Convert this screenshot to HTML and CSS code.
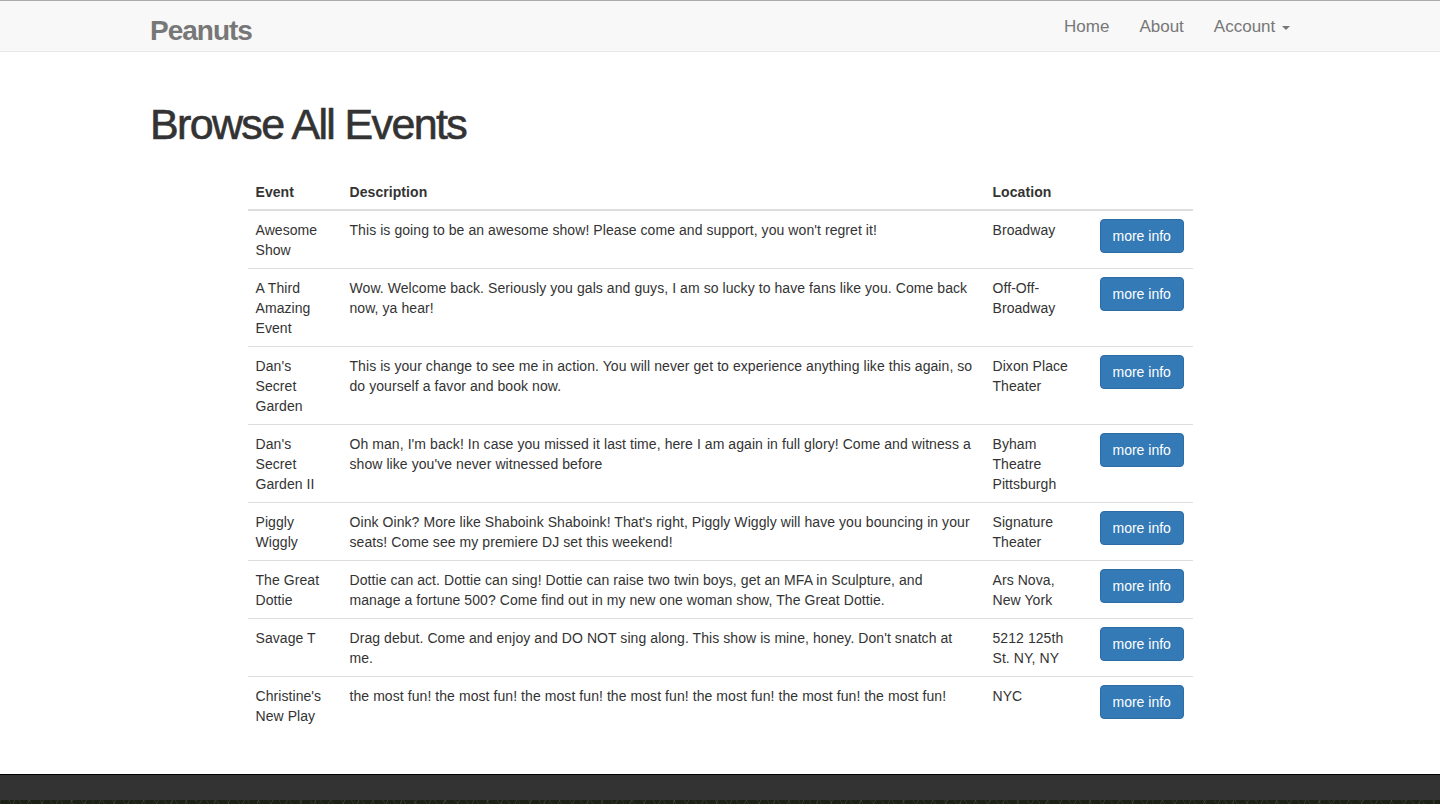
FILE: index.html
```html
<!DOCTYPE html>
<html lang="en">
<head>
<meta charset="utf-8">
<title>Peanuts - Browse All Events</title>
<link rel="stylesheet" href="styles.css">
</head>
<body>
<nav class="navbar">
  <div class="container navbar-inner">
    <a class="brand" href="#">Peanuts</a>
    <ul class="nav">
      <li><a href="#">Home</a></li>
      <li><a href="#">About</a></li>
      <li><a href="#">Account <span class="caret"></span></a></li>
    </ul>
  </div>
</nav>

<main class="container page">
  <h1 class="page-title">Browse All Events</h1>
  <div class="events-wrap">
    <table class="events">
      <thead>
        <tr>
          <th class="c-event">Event</th>
          <th class="c-desc">Description</th>
          <th class="c-loc">Location</th>
          <th class="c-btn"></th>
        </tr>
      </thead>
      <tbody>
        <tr>
          <td>Awesome Show</td>
          <td>This is going to be an awesome show! Please come and support, you won't regret it!</td>
          <td>Broadway</td>
          <td><a class="btn" href="#">more info</a></td>
        </tr>
        <tr>
          <td>A Third Amazing Event</td>
          <td>Wow. Welcome back. Seriously you gals and guys, I am so lucky to have fans like you. Come back now, ya hear!</td>
          <td>Off-Off-Broadway</td>
          <td><a class="btn" href="#">more info</a></td>
        </tr>
        <tr>
          <td>Dan's Secret Garden</td>
          <td>This is your change to see me in action. You will never get to experience anything like this again, so do yourself a favor and book now.</td>
          <td>Dixon Place Theater</td>
          <td><a class="btn" href="#">more info</a></td>
        </tr>
        <tr>
          <td>Dan's Secret Garden II</td>
          <td>Oh man, I'm back! In case you missed it last time, here I am again in full glory! Come and witness a show like you've never witnessed before</td>
          <td>Byham Theatre Pittsburgh</td>
          <td><a class="btn" href="#">more info</a></td>
        </tr>
        <tr>
          <td>Piggly Wiggly</td>
          <td>Oink Oink? More like Shaboink Shaboink! That's right, Piggly Wiggly will have you bouncing in your seats! Come see my premiere DJ set this weekend!</td>
          <td>Signature Theater</td>
          <td><a class="btn" href="#">more info</a></td>
        </tr>
        <tr>
          <td>The Great Dottie</td>
          <td>Dottie can act. Dottie can sing! Dottie can raise two twin boys, get an MFA in Sculpture, and manage a fortune 500? Come find out in my new one woman show, The Great Dottie.</td>
          <td>Ars Nova, New York</td>
          <td><a class="btn" href="#">more info</a></td>
        </tr>
        <tr>
          <td>Savage T</td>
          <td>Drag debut. Come and enjoy and DO NOT sing along. This show is mine, honey. Don't snatch at me.</td>
          <td>5212 125th St. NY, NY</td>
          <td><a class="btn" href="#">more info</a></td>
        </tr>
        <tr>
          <td>Christine's New Play</td>
          <td>the most fun! the most fun! the most fun! the most fun! the most fun! the most fun! the most fun!</td>
          <td>NYC</td>
          <td><a class="btn" href="#">more info</a></td>
        </tr>
      </tbody>
    </table>
  </div>
</main>

<footer class="footer">
  <div class="footer-bar"></div>
  <div class="footer-texture"></div>
</footer>
</body>
</html>
```

FILE: styles.css
```css
* {
  box-sizing: border-box;
}

html, body {
  margin: 0;
  padding: 0;
}

body {
  font-family: "Liberation Sans", Arial, Helvetica, sans-serif;
  font-size: 14px;
  line-height: 20px;
  color: #333;
  background: #fff;
}

a {
  text-decoration: none;
}

.container {
  width: 1170px;
  margin: 0 auto;
  padding: 0 15px;
}

/* Navbar */
.navbar {
  background: #f8f8f8;
  border-top: 1px solid #aaa;
  border-bottom: 1px solid #e7e7e7;
}

.navbar-inner {
  display: flex;
  justify-content: space-between;
  align-items: flex-start;
  height: 50px;
}

.brand {
  display: block;
  margin-left: -15px;
  padding: 20px 15px 10px;
  font-size: 28px;
  font-weight: bold;
  letter-spacing: -1px;
  line-height: 20px;
  color: #777;
}

.nav {
  display: flex;
  list-style: none;
  margin: 0 -15px 0 0;
  padding: 0;
}

.nav a {
  display: block;
  padding: 16px 15px 14px;
  font-size: 17px;
  line-height: 20px;
  color: #777;
}

.caret {
  display: inline-block;
  width: 0;
  height: 0;
  margin-left: 2px;
  vertical-align: middle;
  border-top: 4px solid #777;
  border-left: 4px solid transparent;
  border-right: 4px solid transparent;
}

/* Page */
.page {
  padding-top: 49px;
  padding-bottom: 40px;
}

.page-title {
  margin: 0 0 25px;
  font-size: 43px;
  line-height: 47px;
  font-weight: 500;
  letter-spacing: -1.65px;
  color: #333;
  -webkit-text-stroke: 0.6px #333;
}

.events-wrap {
  width: 945px;
  margin: 0 auto;
}

.events {
  width: 100%;
  table-layout: fixed;
  border-collapse: collapse;
  border-spacing: 0;
  letter-spacing: 0.07px;
}

.events th,
.events td {
  text-align: left;
  vertical-align: top;
  line-height: 20px;
}

.events th {
  padding: 9px 8px 7px;
  font-weight: bold;
  border-bottom: 2px solid #ddd;
  vertical-align: bottom;
}

.events td {
  padding: 9px 8px 8px;
  border-top: 1px solid #ddd;
}

.c-event { width: 94px; }
.c-desc { width: 643px; }
.c-loc { width: 107px; }
.c-btn { width: 101px; }

.btn {
  display: inline-block;
  margin-top: -1px;
  padding: 6px 12px;
  font-size: 14px;
  line-height: 20px;
  letter-spacing: 0;
  color: #fff;
  background: #337ab7;
  border: 1px solid #2e6da4;
  border-radius: 4px;
  white-space: nowrap;
}

/* Footer */
.footer {
  border-top: 1px solid #000;
}

.footer-bar {
  height: 25px;
  background: #333;
}

.footer-texture {
  height: 40px;
  background-color: #1c2117;
  background-image:
    repeating-linear-gradient(115deg, rgba(170, 160, 100, 0.18) 0 1px, transparent 1px 13px),
    repeating-linear-gradient(60deg, rgba(120, 130, 80, 0.15) 0 1px, transparent 1px 9px);
}
```
